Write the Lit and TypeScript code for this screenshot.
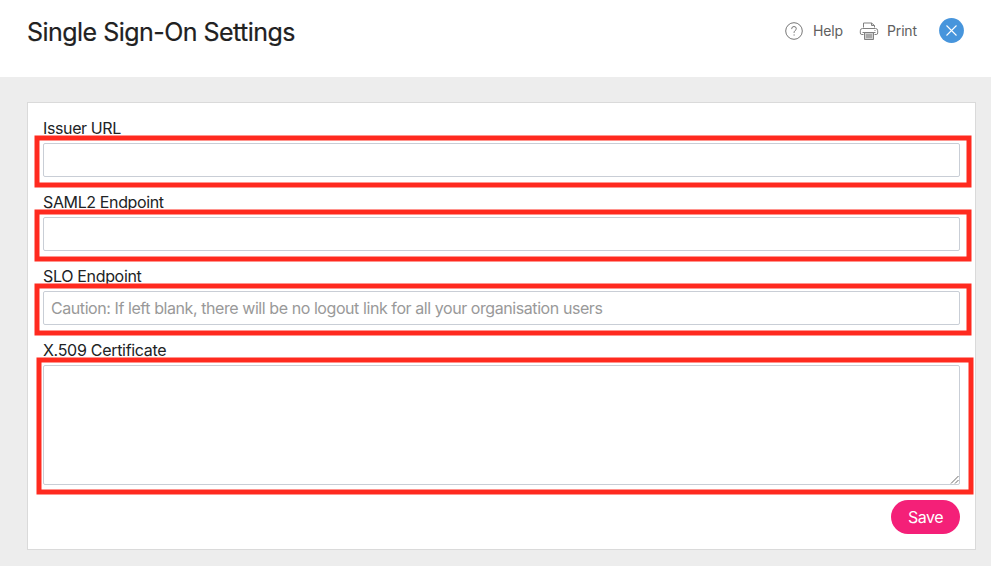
import { LitElement, html, css, nothing } from "lit";
import { customElement, property } from "lit/decorators.js";

@customElement("sso-field")
class SsoField extends LitElement {
  @property() label = "";
  @property() hint = "";
  @property({ type: Boolean, reflect: true }) multiline = false;

  static styles = css`
    :host { display: block; height: 74px; }
    :host([multiline]) { height: 150px; }
    label {
      display: block;
      height: 26px;
      line-height: 22px;
      font-size: 16px;
      color: #212325;
      white-space: nowrap;
    }
    .box { position: relative; height: 34px; }
    :host([multiline]) .box { height: 120px; }
    .control {
      display: block;
      box-sizing: border-box;
      width: 100%;
      height: 100%;
      margin: 0;
      padding: 0 7px;
      border: 1px solid #c9ced6;
      border-radius: 2px;
      background: #fff;
      font: inherit;
      font-size: 16px;
      letter-spacing: inherit;
      outline: none;
      resize: none;
    }
    .control::placeholder { color: #999; opacity: 1; letter-spacing: -0.427px; }
    .mark {
      position: absolute;
      left: -9px;
      top: -8px;
      width: 938px;
      height: 53px;
      pointer-events: none;
    }
    :host([multiline]) .mark { left: -7px; height: 138px; }
    .mark rect { fill: none; stroke: #ff2a1f; stroke-width: 5; }
    .grip { position: absolute; right: 1px; bottom: 1px; width: 9px; height: 9px; }
  `;

  render() {
    return html`
      <label>${this.label}</label>
      <div class="box">
        ${this.multiline
          ? html`<textarea class="control"></textarea>
              <svg class="grip" viewBox="0 0 9 9">
                <path d="M1 8.5 8.5 1M5 8.5 8.5 5" fill="none" stroke="#444" stroke-width=".8" />
              </svg>`
          : html`<input class="control" placeholder=${this.hint || nothing} />`}
        <svg class="mark"><rect x="3" y="3" width="932" height=${this.multiline ? 132 : 47} /></svg>
      </div>
    `;
  }
}

@customElement("app-root")
class AppRoot extends LitElement {
  static styles = css`
    :host {
      display: flex;
      flex-direction: column;
      height: 566px;
      background: #ededed;
      font-family: Inter, "Liberation Sans", sans-serif;
      overflow: hidden;
    }
    header {
      display: flex;
      box-sizing: border-box;
      height: 77px;
      padding: 0 27px;
      background: #fff;
    }
    h1 {
      margin: 0;
      flex: 1;
      font-size: 25px;
      font-weight: 400;
      line-height: 64px;
      letter-spacing: -0.53px;
      color: #212121;
      -webkit-text-stroke: 0.2px #212121;
    }
    .tools { display: flex; align-items: center; height: 60px; font-size: 14px; color: #606060; }
    .help { width: 18px; height: 18px; margin: 1px 10px 0 0; }
    .print { width: 20px; height: 20px; margin: 2px 8px 0 16px; }
    .word { width: 30px; white-space: nowrap; letter-spacing: -0.15px; }
    .close { width: 25px; height: 25px; margin-left: 22px; }
    main {
      display: flex;
      flex-direction: column;
      box-sizing: border-box;
      width: 949px;
      height: 448px;
      margin: 25px 0 0 27px;
      padding: 14px 15px 0;
      border: 1px solid #dadada;
      background: #fff;
    }
    button {
      align-self: flex-end;
      width: 69px;
      height: 34px;
      margin-top: 11px;
      padding: 0;
      border: 0;
      border-radius: 17px;
      background: #f42078;
      color: #fff;
      font: inherit;
      font-size: 16px;
      letter-spacing: -0.5px;
    }
    .issuer { letter-spacing: -0.38px; }
    .saml { letter-spacing: -0.37px; }
    .slo { letter-spacing: -0.33px; }
    .cert { letter-spacing: -0.3px; }
  `;

  render() {
    return html`
      <header>
        <h1>Single Sign-On Settings</h1>
        <div class="tools">
          <svg class="help" viewBox="0 0 18 18" fill="none" stroke="#777" stroke-width="1">
            <circle cx="9" cy="9" r="8.3" />
            <path d="M6.7 7.1V6.8a2.3 2.3 0 0 1 4.6 0c0 1.6-2.2 1.7-2.2 3.7v.5M9.1 12.4v1.2" />
          </svg>
          <span class="word">Help</span>
          <svg class="print" viewBox="0 0 20 20" fill="none" stroke="#808080" stroke-width="1">
            <path d="M4.5 6.5V2H12.5L15.5 4.5V6.5M12.5 2V4.5H15.5" />
            <path d="M4.5 13.5H2.8Q1.3 13.5 1.3 12V9.8Q1.3 7.5 3.5 7.5H16.5Q18.7 7.5 18.7 9.8V12Q18.7 13.5 17.2 13.5H15.5" />
            <path d="M3.5 11.5H16.5" />
            <path d="M5.5 11.5H14.5V18.5H5.5Z" fill="#d0d0d0" />
            <path d="M7 14h6M7 16h6M15.5 9.5h1" />
          </svg>
          <span class="word">Print</span>
          <svg class="close" viewBox="0 0 25 25">
            <circle cx="12.5" cy="12.5" r="12.4" fill="#4795dc" />
            <path d="m7.5 7.5 10 10m0-10-10 10" stroke="#fff" stroke-width="1.1" />
          </svg>
        </div>
      </header>
      <main>
        <sso-field class="issuer" label="Issuer URL"></sso-field>
        <sso-field class="saml" label="SAML2 Endpoint"></sso-field>
        <sso-field
          class="slo"
          label="SLO Endpoint"
          hint="Caution: If left blank, there will be no logout link for all your organisation users"
        ></sso-field>
        <sso-field class="cert" label="X.509 Certificate" multiline></sso-field>
        <button>Save</button>
      </main>
    `;
  }
}
